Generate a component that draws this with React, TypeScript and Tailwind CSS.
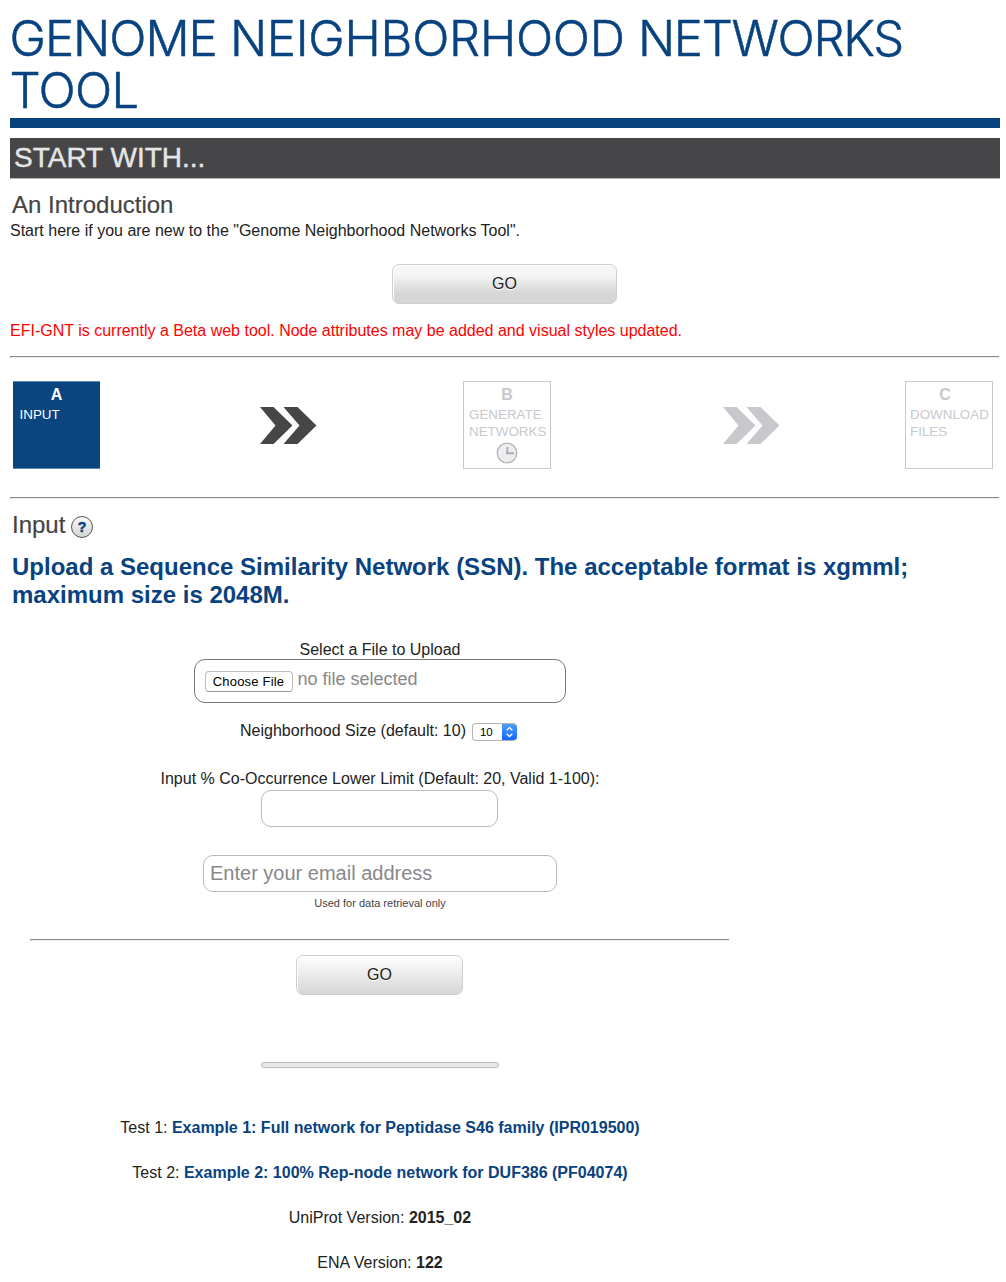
import React from "react";

function Rule() {
  return <div className="h-[2px] border-t border-l border-[#8a8a8a] border-b border-b-[#eeeeee]" />;
}

function Chevrons({ className }: { className: string }) {
  return (
    <svg viewBox="0.5 0 57 37" className={"h-[37px] w-[57px] shrink-0 " + className} fill="currentColor">
      <path d="M0.5 0H14L33 18.5L14 37H0.5L16 18.5Z" />
      <path d="M24 0H38L57 18.5L38 37H24L40 18.5Z" />
    </svg>
  );
}

function GoButton({ className }: { className: string }) {
  return (
    <button
      className={
        "flex h-10 items-center justify-center rounded-[7px] border border-[#cfcfcf] text-base leading-[38px] text-[#222] shadow-[inset_1px_1px_0_#fff] [text-shadow:0_1px_0_#fff] " +
        className
      }
    >
      GO
    </button>
  );
}

function Step({ letter, lines, className, children }: { letter: string; lines: string[]; className: string; children?: React.ReactNode }) {
  return (
    <div className={"flex h-[88px] shrink-0 flex-col border pt-[3px] " + className}>
      <div className="mb-px text-center text-base leading-5 font-bold">{letter}</div>
      {lines.map((l) => (
        <div key={l} className="text-[13.4px] leading-[17px] whitespace-nowrap">{l}</div>
      ))}
      {children}
    </div>
  );
}

export default function App() {
  return (
    <div className="h-[1282px] w-[1006px] overflow-hidden bg-white pt-[13px] pl-[10px] font-['Liberation_Sans',Arial,sans-serif] text-base leading-5 text-[#222]">
      <header className="-ml-[0.5px] h-[105px] w-[990px] font-['Inter',sans-serif] text-[49px] leading-[52px] font-light tracking-[-0.67px] whitespace-nowrap text-[#08427f] [-webkit-text-stroke:0.5px_#08427f]">
        <div>
          <span className="tracking-[-1px]">GENOME</span> <span className="tracking-[-0.25px]">NEIGHBORHOOD</span>{" "}
          <span className="tracking-[-1.3px]">NETWORKS</span>
        </div>
        <div>TOOL</div>
      </header>
      <div className="h-[10px] w-[990px] bg-[#08427f]" />
      <div className="mt-[10px] h-[41px] w-[990px] border-b border-[#b5b5b5] bg-[#464648] pl-1 text-[28px] leading-10 text-[#e6e6e6] [-webkit-text-stroke:0.4px_#e6e6e6]">
        START WITH...
      </div>
      <h2 className="mt-[11px] h-[31px] pl-[2px] text-[24px] leading-[30px] text-[#444] [-webkit-text-stroke:0.2px_#444]">An Introduction</h2>
      <p className="h-5">Start here if you are new to the "Genome Neighborhood Networks Tool".</p>
      <GoButton className="mt-[23px] ml-[382px] w-[225px] bg-linear-to-b from-[#f6f6f6] from-25% to-[#d6d6d6] to-75%" />
      <p className="mt-[17px] h-5 text-[#f00]">EFI-GNT is currently a Beta web tool. Node attributes may be added and visual styles updated.</p>
      <div className="mt-[15px] w-[989px]"><Rule /></div>

      <div className="mt-[23px] ml-[3px] flex w-[980px] items-start">
        <Step letter="A" lines={["INPUT"]} className="w-[87px] border-x-0 border-y-[#5d8db5] bg-[#0a4580] text-white [&>div+div]:pl-[6.5px]" />
        <Chevrons className="mt-[26px] ml-[160px] text-[#464648]" />
        <Step letter="B" lines={["GENERATE", "NETWORKS"]} className="ml-[146px] w-[88px] border-[#c8c9cc] text-[#c8c9cc] [&>div+div]:pl-[5px]">
          <svg viewBox="0 0 22 22" className="mt-[2px] ml-8 h-[22px] w-[22px]" fill="none">
            <circle cx="11" cy="11" r="9.8" fill="#ededf0" stroke="#b4b4b8" strokeWidth="1.3" />
            <path d="M11.5 5L11 11.3H18" stroke="#acacb0" strokeWidth="1.9" />
          </svg>
        </Step>
        <Chevrons className="mt-[26px] ml-[172px] text-[#c7c8cb]" />
        <Step letter="C" lines={["DOWNLOAD", "FILES"]} className="ml-[125px] w-[88px] border-[#c8c9cc] text-[#c8c9cc] [&>div:first-child]:pr-2 [&>div+div]:pl-1" />
      </div>
      <div className="mt-7 w-[989px]"><Rule /></div>

      <div className="mt-[11px] flex h-[31px] pl-[2px]">
        <h2 className="w-[59px] text-[24px] leading-[30px] text-[#444] [-webkit-text-stroke:0.2px_#444]">Input</h2>
        <div className="mt-[6px] flex h-[22px] w-[22px] items-center justify-center rounded-full border border-[#555] bg-linear-to-b from-[#f8f8f8] to-[#d4d4d4] text-[14px] font-bold text-[#08427f] [-webkit-text-stroke:0.5px_#08427f]">?</div>
      </div>
      <h3 className="mt-3 pl-[2px] text-[24px] leading-7 font-bold whitespace-nowrap text-[#08427f]">
        <div>Upload a Sequence Similarity Network (SSN). The acceptable format is xgmml;</div>
        <div>maximum size is 2048M.</div>
      </h3>

      <main className="mt-[31px] flex w-[740px] flex-col items-center">
        <div className="h-[19px]">Select a File to Upload</div>
        <div className="-ml-px flex h-[44px] w-[372px] rounded-[11px] border border-[#777] pl-[10px]">
          <button className="mt-[11px] h-[21px] w-[88px] rounded-[4px] border border-[#bcbcbc] border-b-[#999] bg-white text-[13px] leading-[19px] tracking-[0.2px] whitespace-nowrap text-black">Choose File</button>
          <span className="ml-[5px] pt-[9px] text-[18px] text-[#888]">no file selected</span>
        </div>
        <div className="mt-[18px] -ml-[3px] flex h-5">
          <span>Neighborhood Size (default: 10)</span>
          <div className="mt-[2px] ml-[6px] flex h-[18px] w-[45px] overflow-hidden rounded-[4px] border border-r-0 border-[#b5b5b5] text-[11.5px] leading-4 text-black">
            <span className="w-[29px] pl-[7px]">10</span>
            <span className="-my-px h-[18px] w-[15px] bg-linear-to-b from-[#549ffb] to-[#0b61fd]">
              <svg viewBox="0 0 15 18" className="h-[18px] w-[15px]" fill="none" stroke="white" strokeWidth="1.4">
                <path d="M4.7 7.3L7.5 4.6L10.3 7.3M4.7 10.8L7.5 13.5L10.3 10.8" />
              </svg>
            </span>
          </div>
        </div>
        <div className="mt-7 h-[21px]">Input % Co-Occurrence Lower Limit (Default: 20, Valid 1-100):</div>
        <input className="-ml-px h-[37px] w-[237px] rounded-[10px] border border-[#bbb] bg-white" />
        <input placeholder="Enter your email address" className="mt-7 h-[37px] w-[354px] rounded-[10px] border border-[#bbb] bg-white px-[6px] text-[20px] placeholder:text-[#888]" />
        <div className="mt-px h-[21px] text-[11px] text-[#444]">Used for data retrieval only</div>
        <div className="mt-[25px] -ml-px w-[699px]"><Rule /></div>
        <GoButton className="mt-[14px] -ml-px w-[167px] bg-linear-to-b from-white to-[#d6d6d6]" />
        <div className="mt-[67px] h-[6px] w-[238px] rounded-[3px] border border-[#bcbcbc] bg-[#e6e6e6]" />
        <div className="mt-[50px] flex flex-col items-center gap-[25px]">
          <p>Test 1: <a className="font-bold text-[#08427f]">Example 1: Full network for Peptidase S46 family (IPR019500)</a></p>
          <p>Test 2: <a className="font-bold text-[#08427f]">Example 2: 100% Rep-node network for DUF386 (PF04074)</a></p>
          <p>UniProt Version: <b>2015_02</b></p>
          <p>ENA Version: <b>122</b></p>
        </div>
      </main>
    </div>
  );
}
